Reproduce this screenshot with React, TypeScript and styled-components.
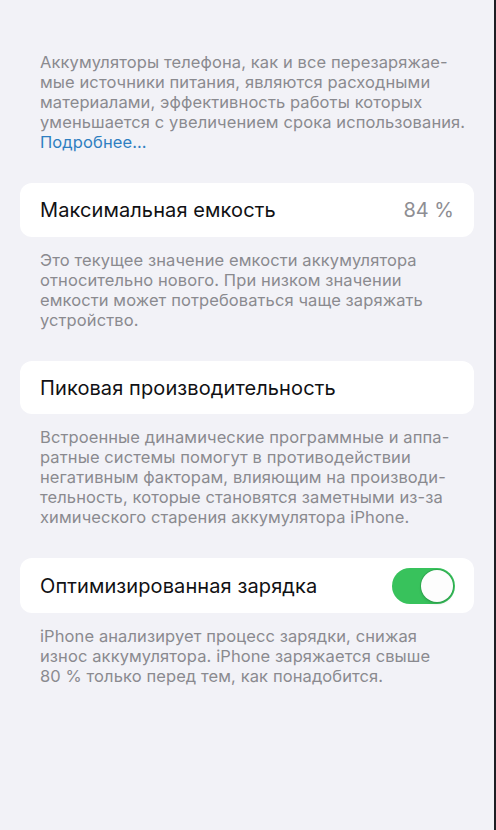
import React from "react";
import styled, { createGlobalStyle } from "styled-components";

const Global = createGlobalStyle`
  html, body {
    margin: 0;
    padding: 0;
    background: #f2f2f7;
  }
  * { box-sizing: border-box; }
`;

const Page = styled.div`
  width: 100%;
  min-height: 830px;
  background: #f2f2f7;
  padding: 52px 20px 0 20px;
  font-family: Inter, "Noto Sans", "Liberation Sans", sans-serif;
  border-right: 2px solid #1e1e24;
  -webkit-font-smoothing: antialiased;
`;

const Note = styled.p<{ $top?: number }>`
  margin: ${(p) => p.$top ?? 13}px 0 0 0;
  padding: 0 20px;
  font-size: 16.5px;
  line-height: 20px;
  color: #8a8a8f;
  letter-spacing: 0.1px;
`;

const Line = styled.span`
  display: block;
  white-space: nowrap;
`;

const Link = styled.span`
  color: #2f7fc1;
`;

const Card = styled.div<{ $height?: number }>`
  margin-top: 31px;
  height: ${(p) => p.$height ?? 54}px;
  background: #ffffff;
  border-radius: 12px;
  padding: 0 20px;
  display: flex;
  align-items: center;
  justify-content: space-between;
`;

const Title = styled.span`
  font-size: 20px;
  color: #111114;
  letter-spacing: 0.1px;
`;

const Value = styled.span`
  font-size: 20px;
  color: #8e8e93;
`;

const Switch = styled.div<{ $on: boolean }>`
  width: 63px;
  height: 36px;
  border-radius: 18px;
  background: ${(p) => (p.$on ? "#38c25c" : "#e5e5ea")};
  display: flex;
  align-items: center;
  justify-content: ${(p) => (p.$on ? "flex-end" : "flex-start")};
  padding: 2px;
  margin-right: -1px;
`;

const Knob = styled.div`
  width: 32px;
  height: 32px;
  border-radius: 50%;
  background: #fdfdfd;
  box-shadow: 0 0 0 1px rgba(40, 150, 70, 0.5), 0 2px 3px rgba(0, 0, 0, 0.12);
`;

export default function App() {
  return (
    <>
      <Global />
      <Page>
        <Note $top={0}>
          <Line>Аккумуляторы телефона, как и все перезаряжае-</Line>
          <Line>мые источники питания, являются расходными</Line>
          <Line>материалами, эффективность работы которых</Line>
          <Line>уменьшается с увеличением срока использования.</Line>
          <Line>
            <Link>Подробнее…</Link>
          </Line>
        </Note>

        <Card>
          <Title>Максимальная емкость</Title>
          <Value>84 %</Value>
        </Card>
        <Note>
          <Line>Это текущее значение емкости аккумулятора</Line>
          <Line>относительно нового. При низком значении</Line>
          <Line>емкости может потребоваться чаще заряжать</Line>
          <Line>устройство.</Line>
        </Note>

        <Card $height={53}>
          <Title>Пиковая производительность</Title>
        </Card>
        <Note>
          <Line>Встроенные динамические программные и аппа-</Line>
          <Line>ратные системы помогут в противодействии</Line>
          <Line>негативным факторам, влияющим на производи-</Line>
          <Line>тельность, которые становятся заметными из-за</Line>
          <Line>химического старения аккумулятора iPhone.</Line>
        </Note>

        <Card $height={55}>
          <Title>Оптимизированная зарядка</Title>
          <Switch $on>
            <Knob />
          </Switch>
        </Card>
        <Note>
          <Line>iPhone анализирует процесс зарядки, снижая</Line>
          <Line>износ аккумулятора. iPhone заряжается свыше</Line>
          <Line>80 % только перед тем, как понадобится.</Line>
        </Note>
      </Page>
    </>
  );
}
